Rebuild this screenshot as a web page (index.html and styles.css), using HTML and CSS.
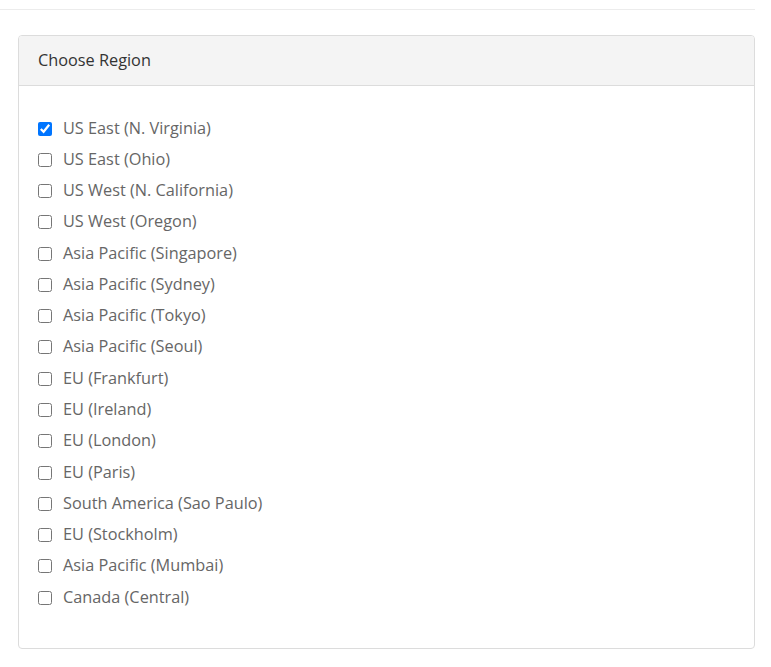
FILE: index.html
```html
<!DOCTYPE html>
<html>
<head>
<meta charset="utf-8">
<link rel="stylesheet" href="styles.css">
</head>
<body>
<div class="page">
  <div class="topbar"></div>
  <div class="card">
    <div class="card-header">Choose Region</div>
    <div class="card-body">
      <label class="row"><input type="checkbox" checked><span>US East (N. Virginia)</span></label>
      <label class="row"><input type="checkbox"><span>US East (Ohio)</span></label>
      <label class="row"><input type="checkbox"><span>US West (N. California)</span></label>
      <label class="row"><input type="checkbox"><span>US West (Oregon)</span></label>
      <label class="row"><input type="checkbox"><span>Asia Pacific (Singapore)</span></label>
      <label class="row"><input type="checkbox"><span>Asia Pacific (Sydney)</span></label>
      <label class="row"><input type="checkbox"><span>Asia Pacific (Tokyo)</span></label>
      <label class="row"><input type="checkbox"><span>Asia Pacific (Seoul)</span></label>
      <label class="row"><input type="checkbox"><span>EU (Frankfurt)</span></label>
      <label class="row"><input type="checkbox"><span>EU (Ireland)</span></label>
      <label class="row"><input type="checkbox"><span>EU (London)</span></label>
      <label class="row"><input type="checkbox"><span>EU (Paris)</span></label>
      <label class="row"><input type="checkbox"><span>South America (Sao Paulo)</span></label>
      <label class="row"><input type="checkbox"><span>EU (Stockholm)</span></label>
      <label class="row"><input type="checkbox"><span>Asia Pacific (Mumbai)</span></label>
      <label class="row"><input type="checkbox"><span>Canada (Central)</span></label>
    </div>
  </div>
</div>
</body>
</html>
```
FILE: styles.css
```css
html, body {
  margin: 0;
  padding: 0;
  background: #fff;
}
body {
  font-family: "Open Sans", "Liberation Sans", sans-serif;
}
.page {
  width: 755px;
}
.topbar {
  height: 9px;
  border-bottom: 1px solid #ececec;
  margin-bottom: 25px;
}
.card {
  margin-left: 18px;
  border: 1px solid #dcdcdc;
  border-radius: 4px;
  overflow: hidden;
}
.card-header {
  background: #f4f4f4;
  border-bottom: 1px solid #dcdcdc;
  height: 47px;
  padding-bottom: 2px;
  display: flex;
  align-items: center;
  padding-left: 19px;
  font-size: 16.3px;
  color: #333;
}
.card-body {
  padding: 27px 19px 35px;
  display: flex;
  flex-direction: column;
}
.row {
  height: 31.27px;
  display: flex;
  align-items: center;
  font-size: 16.3px;
  color: #666;
}
.row span {
  position: relative;
  top: -1px;
}
.row input {
  margin: 0 11px 0 0;
  width: 14px;
  height: 14px;
}
```
